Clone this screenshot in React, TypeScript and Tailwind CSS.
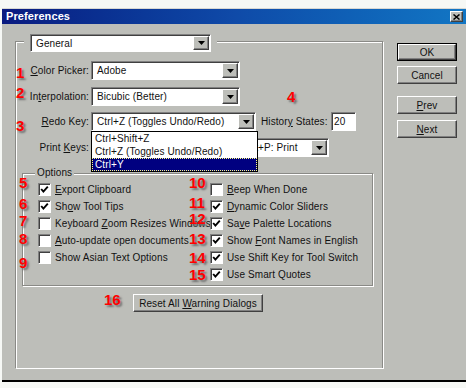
import type { ReactNode } from "react";

const raised =
  "border border-t-white border-l-white border-r-[#404040] border-b-[#404040] shadow-[inset_-1px_-1px_0_#808080]";
const sunken =
  "border border-t-[#808080] border-l-[#808080] border-r-white border-b-white shadow-[inset_1px_1px_0_#404040]";
const etched = "border border-[#8a8a86] shadow-[1px_1px_0_#fff,inset_1px_1px_0_#fff]";

const marks = [
  { n: "1", x: 16, y: 65 },
  { n: "2", x: 16, y: 85 },
  { n: "3", x: 16, y: 118 },
  { n: "4", x: 287, y: 89 },
  { n: "5", x: 19, y: 175 },
  { n: "6", x: 19, y: 196 },
  { n: "7", x: 19, y: 213 },
  { n: "8", x: 19, y: 231 },
  { n: "9", x: 19, y: 255 },
  { n: "10", x: 189, y: 175 },
  { n: "11", x: 189, y: 195 },
  { n: "12", x: 189, y: 211 },
  { n: "13", x: 189, y: 231 },
  { n: "14", x: 189, y: 250 },
  { n: "15", x: 189, y: 267 },
  { n: "16", x: 104, y: 292 },
];

function Arrow() {
  return (
    <svg width="7" height="4" viewBox="0 0 7 4">
      <polygon points="0,0 7,0 3.5,4" fill="#000" />
    </svg>
  );
}

function Combo({ value, className }: { value: string; className: string }) {
  return (
    <div className={`flex bg-white p-[1px] ${sunken} ${className}`}>
      <span className="flex flex-1 items-center overflow-hidden whitespace-nowrap pl-[4px]">{value}</span>
      <span className={`flex w-[16px] items-center justify-center bg-[#bdbeb9] ${raised}`}>
        <Arrow />
      </span>
    </div>
  );
}

function Button({ children, isDefault, className }: { children: ReactNode; isDefault?: boolean; className: string }) {
  return (
    <div className={`${isDefault ? "border border-black" : ""} ${className}`}>
      <div className={`flex h-full items-center justify-center bg-[#bdbeb9] ${raised}`}>{children}</div>
    </div>
  );
}

function Check({ on, children }: { on: boolean; children: ReactNode }) {
  return (
    <div className="flex h-[17px] items-center whitespace-nowrap">
      <span className={`flex h-[13px] w-[13px] shrink-0 items-center justify-center bg-white ${sunken}`}>
        {on ? (
          <svg width="9" height="9" viewBox="0 0 9 9">
            <polyline points="1.2,4 3.4,6.6 7.8,1.6" fill="none" stroke="#000" strokeWidth="1.9" />
          </svg>
        ) : null}
      </span>
      <span className="ml-[4px]">{children}</span>
    </div>
  );
}

export default function App() {
  return (
    <div className="relative h-[388px] w-[466px] overflow-hidden bg-[#f6f8f5] font-['Liberation_Sans',Arial,sans-serif] text-[10px] tracking-[0.1px] text-[#111]">
      <div className="ml-[2px] mt-[8px] h-[374px] w-[464px] border-t border-b-2 border-t-[#d8d8d4] border-b-black bg-[#bdbeb9]">
        {/* title bar */}
        <div className="flex h-[15px] items-center justify-between bg-linear-to-r from-[#0a1a80] via-[#0f4aa8] to-[#1276c4] pl-[4px] pr-[3px]">
          <span className="text-[11px] font-bold text-white">Preferences</span>
          <span className={`flex h-[11px] w-[13px] items-center justify-center bg-[#bdbeb9] ${raised}`}>
            <svg width="7" height="6" viewBox="0 0 7 6">
              <path d="M0.5 0.5 L6.5 5.5 M6.5 0.5 L0.5 5.5" stroke="#000" strokeWidth="1.5" />
            </svg>
          </span>
        </div>

        <div className="flex items-start">
          {/* main group */}
          <div className={`ml-[13px] mt-[17px] h-[327px] w-[368px] border-b-0 ${etched}`}>
            <div className="-mt-[8px] ml-[8px] w-fit bg-[#bdbeb9] px-[6px]">
              <Combo value="General" className="h-[18px] w-[181px]" />
            </div>

            <div className="mt-[9px] flex items-center">
              <span className="w-[75px] pr-[2px] text-right">
                <u>C</u>olor Picker:
              </span>
              <Combo value="Adobe" className="h-[19px] w-[149px]" />
            </div>

            <div className="mt-[7px] flex items-center">
              <span className="w-[75px] pr-[2px] text-right">
                In<u>t</u>erpolation:
              </span>
              <Combo value="Bicubic (Better)" className="h-[19px] w-[149px]" />
            </div>

            <div className="relative z-10 mt-[6px] flex items-center">
              <span className="w-[75px] pr-[2px] text-right">
                <u>R</u>edo Key:
              </span>
              <Combo value="Ctrl+Z (Toggles Undo/Redo)" className="h-[19px] w-[165px]" />
              <span className="ml-[5px] w-[70px] whitespace-nowrap">
                Histor<u>y</u> States:
              </span>
              <span className={`flex h-[19px] w-[25px] items-center bg-white pl-[2px] ${sunken}`}>20</span>

              <div className="absolute left-[75px] top-[19px] w-[167px] border border-black bg-white">
                <div className="h-[13px] pl-[3px] leading-[13px]">Ctrl+Shift+Z</div>
                <div className="h-[13px] pl-[3px] leading-[13px]">Ctrl+Z (Toggles Undo/Redo)</div>
                <div className="h-[13px] border border-dotted border-[#ffff80] bg-[#000080] pl-[2px] leading-[11px] text-white">
                  Ctrl+Y
                </div>
              </div>
            </div>

            <div className="mt-[7px] flex items-center">
              <span className="w-[75px] pr-[2px] text-right">
                Print <u>K</u>eys:
              </span>
              <Combo
                value={"Ctrl+P: Print with Preview\u00a0/\u00a0\u00a0Ctrl+Alt+P: Print"}
                className="h-[19px] w-[238px]"
              />
            </div>

            {/* options group */}
            <div className={`ml-[6px] mt-[16px] h-[113px] w-[351px] ${etched}`}>
              <div className="-mt-[8px] ml-[12px] w-fit bg-[#bdbeb9] px-[2px] leading-[14px]">Options</div>
              <div className="mt-[1px] flex">
                <div className="ml-[15px] w-[172px]">
                  <Check on>
                    <u>E</u>xport Clipboard
                  </Check>
                  <Check on>
                    Sh<u>o</u>w Tool Tips
                  </Check>
                  <Check on={false}>
                    Keyboard <u>Z</u>oom Resizes Windows
                  </Check>
                  <Check on={false}>
                    <u>A</u>uto-update open documents
                  </Check>
                  <Check on={false}>Show Asian Text Options</Check>
                </div>
                <div>
                  <Check on={false}>
                    <u>B</u>eep When Done
                  </Check>
                  <Check on>
                    <u>D</u>ynamic Color Sliders
                  </Check>
                  <Check on>
                    Sa<u>v</u>e Palette Locations
                  </Check>
                  <Check on>
                    Show <u>F</u>ont Names in English
                  </Check>
                  <Check on>Use Shift Key for Tool Switch</Check>
                  <Check on>Use Smart Quotes</Check>
                </div>
              </div>
            </div>

            <Button className="ml-[117px] mt-[8px] h-[18px] w-[130px]">
              <span>
                Reset All <u>W</u>arning Dialogs
              </span>
            </Button>
          </div>

          {/* buttons */}
          <div className="ml-[14px] mt-[19px] w-[60px]">
            <Button isDefault className="h-[18px]">
              OK
            </Button>
            <Button className="mt-[5px] h-[18px]">Cancel</Button>
            <Button className="mt-[12px] h-[18px]">
              <span>
                <u>P</u>rev
              </span>
            </Button>
            <Button className="mt-[6px] h-[18px]">
              <span>
                <u>N</u>ext
              </span>
            </Button>
          </div>
        </div>
      </div>

      {marks.map((m) => (
        <span
          key={m.n}
          className="absolute z-20 text-[15px] font-bold leading-none tracking-normal text-[#ff0000] [text-shadow:2px_2px_2px_#6f6f6f]"
          style={{ left: m.x, top: m.y }}
        >
          {m.n}
        </span>
      ))}
    </div>
  );
}
